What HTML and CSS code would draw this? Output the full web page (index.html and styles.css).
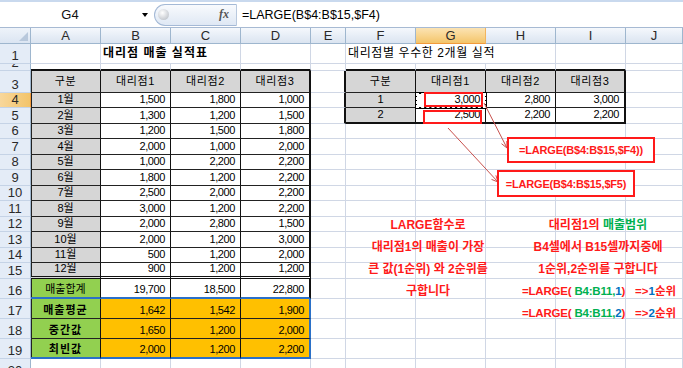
FILE: index.html
```html
<!DOCTYPE html>
<html lang="ko">
<head>
<meta charset="utf-8">
<title>LARGE 함수</title>
<link rel="stylesheet" href="styles.css">
</head>
<body>
<div class="app">
  <div class="topstrip"></div>
  <div class="fbar">
    <div class="namebox">G4</div>
    <div class="nb-arrow"></div>
    <div class="pill"><span class="knob"></span><span class="fx">fx</span></div>
    <div class="formula">=LARGE(B$4:B$15,$F4)</div>
  </div>

  <div class="sheet">
    <!-- column headers -->
    <div class="corner"><span class="tri"></span></div>
    <div class="ch">A</div><div class="ch">B</div><div class="ch">C</div><div class="ch">D</div><div class="ch">E</div>
    <div class="ch">F</div><div class="ch sel">G</div><div class="ch">H</div><div class="ch">I</div><div class="ch">J</div>

    <!-- row 1 -->
    <div class="rh">1</div><div class="c"></div>
    <div class="c title span2">대리점 매출 실적표</div>
    <div class="c"></div><div class="c"></div>
    <div class="c sub span3">대리점별 우수한 2개월 실적</div>
    <div class="c"></div><div class="c"></div>

    <!-- row 2 -->
    <div class="rh">2</div>
    <div class="c tt"></div><div class="c tt"></div><div class="c tt"></div><div class="c tt"></div><div class="c"></div>
    <div class="c tt"></div><div class="c tt"></div><div class="c tt"></div><div class="c tt"></div><div class="c"></div>

    <!-- row 3 -->
    <div class="rh">3</div>
    <div class="c t g hd la">구분</div><div class="c t g hd">대리점1</div><div class="c t g hd">대리점2</div><div class="c t g hd tr">대리점3</div><div class="c tl"></div>
    <div class="c t g hd">구분</div><div class="c t g hd">대리점1</div><div class="c t g hd">대리점2</div><div class="c t g hd tr">대리점3</div><div class="c"></div>

    <!-- row 4 -->
    <div class="rh sel">4</div>
    <div class="c t g m la">1월</div><div class="c t n">1,500</div><div class="c t n">1,800</div><div class="c t n tr">1,000</div><div class="c tl"></div>
    <div class="c t g m">1</div><div class="c t n">3,000</div><div class="c t n">2,800</div><div class="c t n tr">3,000</div><div class="c"></div>

    <!-- row 5 -->
    <div class="rh">5</div>
    <div class="c t g m la">2월</div><div class="c t n">1,300</div><div class="c t n">1,200</div><div class="c t n tr">1,500</div><div class="c tl"></div>
    <div class="c t g m tb">2</div><div class="c t n tb">2,500</div><div class="c t n tb">2,200</div><div class="c t n tr tb">2,200</div><div class="c"></div>

    <!-- row 6 -->
    <div class="rh">6</div>
    <div class="c t g m la">3월</div><div class="c t n">1,200</div><div class="c t n">1,500</div><div class="c t n tr">1,800</div><div class="c"></div>
    <div class="c"></div><div class="c"></div><div class="c"></div><div class="c"></div><div class="c"></div>

    <!-- row 7 -->
    <div class="rh">7</div>
    <div class="c t g m la">4월</div><div class="c t n">2,000</div><div class="c t n">1,000</div><div class="c t n tr">2,000</div><div class="c"></div>
    <div class="c"></div><div class="c"></div><div class="c"></div><div class="c"></div><div class="c"></div>

    <!-- row 8 -->
    <div class="rh">8</div>
    <div class="c t g m la">5월</div><div class="c t n">1,000</div><div class="c t n">2,200</div><div class="c t n tr">2,200</div><div class="c"></div>
    <div class="c"></div><div class="c"></div><div class="c"></div><div class="c"></div><div class="c"></div>

    <!-- row 9 -->
    <div class="rh">9</div>
    <div class="c t g m la">6월</div><div class="c t n">1,800</div><div class="c t n">1,200</div><div class="c t n tr">2,200</div><div class="c"></div>
    <div class="c"></div><div class="c"></div><div class="c"></div><div class="c"></div><div class="c"></div>

    <!-- row 10 -->
    <div class="rh">10</div>
    <div class="c t g m la">7월</div><div class="c t n">2,500</div><div class="c t n">2,000</div><div class="c t n tr">2,200</div><div class="c"></div>
    <div class="c"></div><div class="c"></div><div class="c"></div><div class="c"></div><div class="c"></div>

    <!-- row 11 -->
    <div class="rh">11</div>
    <div class="c t g m la">8월</div><div class="c t n">3,000</div><div class="c t n">1,200</div><div class="c t n tr">2,200</div><div class="c"></div>
    <div class="c"></div><div class="c"></div><div class="c"></div><div class="c"></div><div class="c"></div>

    <!-- row 12 -->
    <div class="rh">12</div>
    <div class="c t g m la">9월</div><div class="c t n">2,000</div><div class="c t n">2,800</div><div class="c t n tr">1,500</div><div class="c"></div>
    <div class="c"></div><div class="c"></div><div class="c"></div><div class="c"></div><div class="c"></div>

    <!-- row 13 -->
    <div class="rh">13</div>
    <div class="c t g m la">10월</div><div class="c t n">2,000</div><div class="c t n">1,200</div><div class="c t n tr">3,000</div><div class="c"></div>
    <div class="c"></div><div class="c"></div><div class="c"></div><div class="c"></div><div class="c"></div>

    <!-- row 14 -->
    <div class="rh">14</div>
    <div class="c t g m la">11월</div><div class="c t n">500</div><div class="c t n">1,200</div><div class="c t n tr">2,000</div><div class="c"></div>
    <div class="c"></div><div class="c"></div><div class="c"></div><div class="c"></div><div class="c"></div>

    <!-- row 15 -->
    <div class="rh">15</div>
    <div class="c t g m la dbl">12월</div><div class="c t n dbl">900</div><div class="c t n dbl">1,200</div><div class="c t n tr dbl">1,200</div><div class="c"></div>
    <div class="c"></div><div class="c"></div><div class="c"></div><div class="c"></div><div class="c"></div>

    <!-- row 16 -->
    <div class="rh">16</div>
    <div class="c t gr m la bb">매출합계</div><div class="c t n bb">19,700</div><div class="c t n bb">18,500</div><div class="c t n tr bb">22,800</div><div class="c"></div>
    <div class="c"></div><div class="c"></div><div class="c"></div><div class="c"></div><div class="c"></div>

    <!-- row 17 -->
    <div class="rh">17</div>
    <div class="c t gr m b la">매출평균</div><div class="c t n o">1,642</div><div class="c t n o">1,542</div><div class="c t n o br">1,900</div><div class="c"></div>
    <div class="c"></div><div class="c"></div><div class="c"></div><div class="c"></div><div class="c"></div>

    <!-- row 18 -->
    <div class="rh">18</div>
    <div class="c t gr m b la">중간값</div><div class="c t n o">1,650</div><div class="c t n o">1,200</div><div class="c t n o br">2,000</div><div class="c"></div>
    <div class="c"></div><div class="c"></div><div class="c"></div><div class="c"></div><div class="c"></div>

    <!-- row 19 -->
    <div class="rh">19</div>
    <div class="c t gr m b la bb">최빈값</div><div class="c t n o bb">2,000</div><div class="c t n o bb">1,200</div><div class="c t n o br bb">2,200</div><div class="c"></div>
    <div class="c"></div><div class="c"></div><div class="c"></div><div class="c"></div><div class="c"></div>

    <!-- row 20 -->
    <div class="rh">20</div>
    <div class="c"></div><div class="c"></div><div class="c"></div><div class="c"></div><div class="c"></div>
    <div class="c"></div><div class="c"></div><div class="c"></div><div class="c"></div><div class="c"></div>
  </div>

  <!-- overlays -->
  <div class="active"></div>
  <div class="hl hl1"></div>
  <div class="hl hl2"></div>

  <svg class="arrows" width="683" height="368" viewBox="0 0 683 368">
    <line x1="484" y1="103" x2="507" y2="148"/>
    <polyline points="506.8,141 507,148 501.5,143.7"/>
    <line x1="448" y1="128" x2="498" y2="182"/>
    <polyline points="495.9,175.3 498,182 491.5,179.4"/>
  </svg>

  <div class="fbox fbox1">=LARGE(B$4:B$15,$F4))</div>
  <div class="fbox fbox2">=LARGE(B$4:B$15,$F5)</div>

  <div class="note note-left">
    <div>LARGE함수로</div>
    <div>대리점1의 매출이 가장</div>
    <div>큰 값(1순위) 와 2순위를</div>
    <div>구합니다</div>
  </div>

  <div class="note note-right">
    <div>대리점1의 <span class="grn">매출범위</span></div>
    <div>B4셀에서 B15셀까지중에</div>
    <div>1순위,2순위를 구합니다</div>
    <div class="fl"><span class="fl-f">=LARGE( <span class="grn">B4:B11,</span><span class="blu">1</span>)</span><span>=&gt;<span class="blu">1</span>순위</span></div>
    <div class="fl"><span class="fl-f">=LARGE( <span class="grn">B4:B11,</span><span class="blu">2</span>)</span><span>=&gt;<span class="blu">2</span>순위</span></div>
  </div>
</div>
</body>
</html>
```
FILE: styles.css
```css
* { box-sizing: border-box; }
html, body { margin: 0; padding: 0; }
body {
  font-family: "Liberation Sans", "Noto Sans CJK KR", sans-serif;
  background: #fff;
  color: #000;
}
.app {
  position: relative;
  width: 683px;
  height: 368px;
  overflow: hidden;
}

/* formula bar */
.topstrip {
  height: 2px;
  background: #c9d9ee;
}
.fbar {
  height: 26px;
  display: flex;
  align-items: center;
  background: #fff;
  border-bottom: 1px solid #a7bad3;
}
.namebox {
  width: 140px;
  text-align: center;
  font-size: 13px;
  color: #111;
}
.nb-arrow {
  width: 0;
  height: 0;
  margin-left: 2px;
  border-left: 3.5px solid transparent;
  border-right: 3.5px solid transparent;
  border-top: 4px solid #000;
}
.pill {
  position: relative;
  margin-left: 6px;
  width: 83px;
  height: 22px;
  border: 1px solid #a4b9d6;
  border-right: 1px solid #b9c9de;
  border-radius: 11px 0 0 11px;
  background: linear-gradient(#f8fafd, #dfe8f4);
  display: flex;
  align-items: center;
  justify-content: space-between;
  padding: 0 7px 0 3px;
}
.knob {
  width: 11px;
  height: 11px;
  border-radius: 50%;
  background: radial-gradient(circle at 40% 35%, #ffffff, #c8ccd2 70%, #a9afb8);
}
.fx {
  font-family: "Liberation Serif", serif;
  font-style: italic;
  font-weight: bold;
  font-size: 12px;
  color: #555;
}
.formula {
  margin-left: 5px;
  font-size: 12.5px;
  color: #000;
}

/* sheet grid */
.sheet {
  display: grid;
  grid-template-columns: 31px repeat(4, 70px) 35px repeat(4, 70px) 57px;
  grid-template-rows: 16px 20px 7px 22px
    15px 16px 15px 16px 15px 16px 15px 16px 15px 16px 15px 16px
    20px 20px 20px 20px 20px;
  font-size: 11px;
}
.corner {
  position: relative;
  background: linear-gradient(#eef3fa, #dbe5f2);
  border-right: 1px solid #9eb6ce;
  border-bottom: 1px solid #9eb6ce;
}
.tri {
  position: absolute;
  right: 2px;
  bottom: 2px;
  width: 0;
  height: 0;
  border-left: 9px solid transparent;
  border-bottom: 9px solid #b8c8dc;
}
.ch {
  display: flex;
  align-items: center;
  justify-content: center;
  font-size: 13px;
  color: #2a2a2a;
  background: linear-gradient(#f5f8fc, #e6edf6 55%, #dbe4f0);
  border-right: 1px solid #9eb6ce;
  border-bottom: 1px solid #9eb6ce;
}
.ch.sel {
  background: linear-gradient(#fbe3b4, #f8d38b 55%, #f3c46a);
  border-bottom: 1px solid #f29a3a;
  border-right: 1px solid #f2b45e;
}
.rh {
  display: flex;
  align-items: flex-end;
  justify-content: center;
  overflow: hidden;
  font-size: 13px;
  line-height: 15px;
  color: #2a2a2a;
  background: #e4ecf7;
  border-right: 1px solid #9eb6ce;
  border-bottom: 1px solid #c5d3e6;
}
.rh.sel {
  background: linear-gradient(90deg, #f8d79b, #f3c46a);
  border-right: 1px solid #f29a3a;
}

.c {
  display: flex;
  align-items: flex-end;
  padding: 0 2px 1px;
  line-height: 13px;
  white-space: nowrap;
  border-right: 1px solid #d0d7e5;
  border-bottom: 1px solid #d0d7e5;
  background: #fff;
}
.span2 { grid-column: span 2; }
.span3 { grid-column: span 3; }
.title {
  align-items: center;
  font-size: 12px;
  font-weight: bold;
  letter-spacing: 1px;
  padding-left: 2px;
}
.sub {
  align-items: center;
  font-size: 12px;
  letter-spacing: 0.6px;
  padding-left: 2px;
}

/* table cells */
.t {
  border-right: 1px solid #111;
  border-bottom: 1px solid #222;
}
.tt { border-bottom: 2px solid #111; }
.tr { border-right: 2px solid #111; }
.tl { border-right: 2px solid #111; }
.tb { border-bottom: 2px solid #111; }
.la { box-shadow: inset 1px 0 0 #222; }
.g { background: #d6d6d6; }
.gr { background: #92d050; }
.o { background: #ffc000; }
.hd {
  justify-content: center;
  align-items: center;
  letter-spacing: 0.6px;
}
.m {
  justify-content: center;
}
.b {
  font-weight: bold;
  letter-spacing: 1px;
}
.n {
  justify-content: flex-end;
  padding-right: 5px;
  letter-spacing: -0.4px;
}
.dbl { border-bottom: 3px double #111; }
.bb { border-bottom: 2px solid #2a70c8; }
.br { border-right: 2px solid #2a70c8; }

/* overlays */
.active {
  position: absolute;
  left: 415px;
  top: 92px;
  width: 72px;
  height: 17px;
  border: 2px solid #000;
  outline: 1px dashed #fff;
  outline-offset: -2px;
}
.hl {
  position: absolute;
  border: 2px solid #ff1a1a;
}
.hl1 { left: 424px; top: 92px; width: 59px; height: 15px; }
.hl2 { left: 423px; top: 110px; width: 59px; height: 14px; }

.arrows {
  position: absolute;
  left: 0;
  top: 0;
  fill: none;
  stroke: #c8514d;
  stroke-width: 1;
}

.fbox {
  position: absolute;
  display: flex;
  align-items: center;
  justify-content: center;
  background: #fff;
  border: 2px solid #ff1a1a;
  color: #ff1a1a;
  font-weight: bold;
  font-size: 11px;
  letter-spacing: -0.2px;
}
.fbox1 { left: 507px; top: 137px; width: 148px; height: 26px; }
.fbox2 { left: 497px; top: 170px; width: 138px; height: 27px; }

.note {
  position: absolute;
  color: #ff1a1a;
  font-weight: bold;
  font-size: 12px;
  line-height: 22px;
  text-align: center;
  white-space: nowrap;
}
.note-left { left: 348px; top: 214px; width: 160px; }
.note-right { left: 518px; top: 214px; width: 160px; }
.grn { color: #00b050; }
.blu { color: #0070c0; }
.fl {
  display: flex;
  gap: 10px;
  padding-left: 4px;
  font-size: 11.5px;
}
.fl-f { letter-spacing: -0.2px; }
```
